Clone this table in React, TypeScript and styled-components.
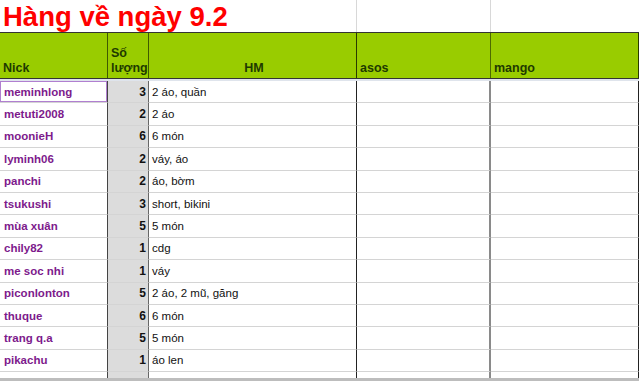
import styled, { createGlobalStyle } from 'styled-components';

const GlobalStyle = createGlobalStyle`
  html, body { margin: 0; padding: 0; background: #fff; }
  body { font-family: "Liberation Sans", Arial, sans-serif; overflow: hidden; }
`;

const COLS = '108px 41px 208px 134px 148px';

const Sheet = styled.div`
  width: 639px;
  height: 381px;
  display: flex;
  flex-direction: column;
  overflow: hidden;
`;

const TitleRow = styled.div`
  display: grid;
  grid-template-columns: 357px 134px 148px;
  height: 32px;
`;

const Title = styled.div`
  color: #ff0000;
  font-weight: bold;
  font-size: 27.5px;
  line-height: 34px;
  padding-left: 3px;
  white-space: nowrap;
  border-right: 1px solid #d8d8d8;
`;

const TitleBlank = styled.div<{ $edge?: string }>`
  border-right: 1px solid ${(p) => p.$edge ?? '#d8d8d8'};
`;

const HeaderRow = styled.div`
  display: grid;
  grid-template-columns: ${COLS};
  height: 45px;
  background: #99cc00;
  border-top: 1px solid #333;
  border-bottom: 1px solid #333;
  box-shadow: 0 2px 0 #dfe4ec;
  margin-bottom: 2px;
`;

const HeadCell = styled.div<{ $center?: boolean; $line?: string }>`
  display: flex;
  align-items: flex-end;
  justify-content: ${(p) => (p.$center ? 'center' : 'flex-start')};
  padding: 0 0 2px 3px;
  font-size: 12.5px;
  font-weight: bold;
  line-height: 15px;
  color: #1e3a00;
  border-right: 1px solid ${(p) => p.$line ?? '#3f5a00'};
`;

const Row = styled.div`
  display: grid;
  grid-template-columns: ${COLS};
  height: 22.4px;
  flex-shrink: 0;
`;

const Cell = styled.div<{ $line: string; $width?: number }>`
  display: flex;
  align-items: center;
  font-size: 11.5px;
  border-bottom: 1px solid #d4d4d4;
  border-right: ${(p) => p.$width ?? 1}px solid ${(p) => p.$line};
  white-space: nowrap;
  overflow: hidden;
`;

const NickCell = styled(Cell)<{ $selected?: boolean }>`
  color: #7d1a8c;
  font-weight: bold;
  padding-left: 4px;
  box-shadow: ${(p) => (p.$selected ? 'inset 0 0 0 1px #b07fd0' : 'none')};
`;

const QtyCell = styled(Cell)`
  background: #dcdcdc;
  justify-content: flex-end;
  font-weight: bold;
  font-size: 12px;
  color: #111;
  padding-right: 2px;
`;

const ItemCell = styled(Cell)`
  color: #111;
  padding-left: 3px;
`;

const Filler = styled.div`
  flex: 1;
  display: grid;
  grid-template-columns: ${COLS};
  border-bottom: 3px solid #bdbdbd;
`;

const FillCell = styled.div<{ $line: string; $width?: number; $gray?: boolean }>`
  border-right: ${(p) => p.$width ?? 1}px solid ${(p) => p.$line};
  background: ${(p) => (p.$gray ? '#dcdcdc' : 'transparent')};
`;

const orders: [string, number, string][] = [
  ['meminhlong', 3, '2 áo, quần'],
  ['metuti2008', 2, '2 áo'],
  ['moonieH', 6, '6 món'],
  ['lyminh06', 2, 'váy, áo'],
  ['panchi', 2, 'áo, bờm'],
  ['tsukushi', 3, 'short, bikini'],
  ['mùa xuân', 5, '5 món'],
  ['chily82', 1, 'cdg'],
  ['me soc nhi', 1, 'váy'],
  ['piconlonton', 5, '2 áo, 2 mũ, găng'],
  ['thuque', 6, '6 món'],
  ['trang q.a', 5, '5 món'],
  ['pikachu', 1, 'áo len'],
];

export default function App() {
  return (
    <>
      <GlobalStyle />
      <Sheet>
        <TitleRow>
          <Title>Hàng về ngày 9.2</Title>
          <TitleBlank />
          <TitleBlank $edge="transparent" />
        </TitleRow>

        <HeaderRow>
          <HeadCell>Nick</HeadCell>
          <HeadCell>Số<br />lượng</HeadCell>
          <HeadCell $center $line="#2a3a00">HM</HeadCell>
          <HeadCell $line="#4d6b00">asos</HeadCell>
          <HeadCell $line="#2a3a00">mango</HeadCell>
        </HeaderRow>

        {orders.map(([nick, qty, items], i) => (
          <Row key={nick}>
            <NickCell $line="#444" $selected={i === 0}>{nick}</NickCell>
            <QtyCell $line="#666">{qty}</QtyCell>
            <ItemCell $line="#222">{items}</ItemCell>
            <Cell $line="#8a8a8a" $width={2} />
            <Cell $line="#222" />
          </Row>
        ))}

        <Filler>
          <FillCell $line="#444" />
          <FillCell $line="#666" $gray />
          <FillCell $line="#222" />
          <FillCell $line="#8a8a8a" $width={2} />
          <FillCell $line="#222" />
        </Filler>
      </Sheet>
    </>
  );
}
